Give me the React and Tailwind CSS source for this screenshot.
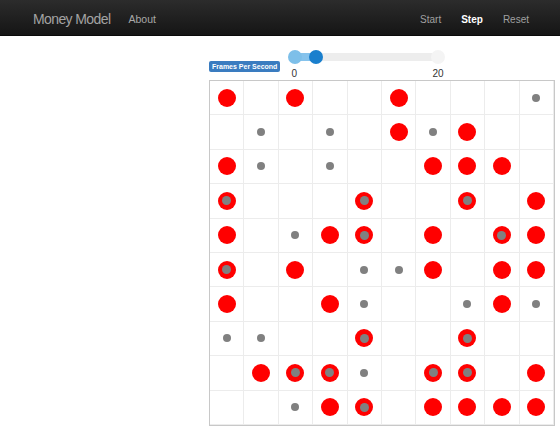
import { useState } from "react";

// R = red agent, G = gray coin, B = both
const rows = [
  "R.R..R...G",
  ".G.G.RGR..",
  "RG.G..RRR.",
  "B...B..B.R",
  "R.GRB.R.BR",
  "B.R.GGR.RR",
  "R..RG..GRG",
  "GG..B..B..",
  ".RBBG.BB.R",
  "..GRB.RRRR",
];

function Cell({ kind }) {
  return (
    <div className="flex items-center justify-center border-r border-b border-[#ececec]">
      {kind === "R" && <div className="w-[18px] h-[18px] rounded-full bg-[#ff0000]" />}
      {kind === "G" && <div className="w-[8px] h-[8px] rounded-full bg-[#808080]" />}
      {kind === "B" && (
        <div className="w-[18px] h-[18px] rounded-full bg-[#ff0000] flex items-center justify-center">
          <div className="w-[9px] h-[9px] rounded-full bg-[#808080]" />
        </div>
      )}
    </div>
  );
}

export default function App() {
  const [fps] = useState(3);

  return (
    <div className="min-h-[438px] bg-white font-['Liberation_Sans',Arial,sans-serif]">
      <div className="h-[36px] pt-[4px] bg-gradient-to-b from-[#2c2c2c] to-[#151515] border-b border-[#0a0a0a] flex items-center">
        <div className="ml-[33px] text-[14px] tracking-[-0.6px] text-[#a3a3a3]">Money Model</div>
        <div className="ml-[18px] text-[10.5px] text-[#a8a8a8]">About</div>
        <div className="ml-auto mr-[31px] flex items-center gap-[20px] text-[10px]">
          <span className="text-[#a0a0a0]">Start</span>
          <span className="text-white font-bold">Step</span>
          <span className="text-[#a0a0a0]">Reset</span>
        </div>
      </div>

      <div className="ml-[209px] mt-[14px] flex items-start">
        <div className="mt-[11px] h-[11px] px-[3px] bg-[#3a7cc0] rounded-[2px] text-white font-bold text-[7px] leading-[11px] whitespace-nowrap">
          Frames Per Second
        </div>
        <div className="ml-[7px] w-[160px]">
          <div className="relative h-[14px] mx-[1px]">
            <div className="absolute left-[3px] right-[3px] top-[3px] h-[8px] rounded-full bg-[#ededed]" />
            <div className="absolute left-[6px] w-[22px] top-[3px] h-[8px] bg-[#86c3ec]" />
            <div className="absolute left-0 top-0 w-[14px] h-[14px] rounded-full bg-[#7dbfe9]" />
            <div className="absolute left-[21px] top-0 w-[14px] h-[14px] rounded-full bg-[#1a7fcd]" />
            <div className="absolute left-[143px] top-0 w-[14px] h-[14px] rounded-full bg-[#f4f4f4]" />
          </div>
          <div className="relative h-[14px] text-[10px] text-[#333]">
            <span className="absolute left-[4px] top-[2px]">0</span>
            <span className="absolute left-[145px] top-[2px]">20</span>
          </div>
        </div>
      </div>

      <div className="ml-[209px] mt-[2px] w-[346px] border border-[#c8c8c8] grid grid-cols-10 grid-rows-10 h-[346px]" data-fps={fps}>
        {rows.map((r, i) =>
          r.split("").map((k, j) => <Cell key={i + "-" + j} kind={k} />)
        )}
      </div>
    </div>
  );
}
